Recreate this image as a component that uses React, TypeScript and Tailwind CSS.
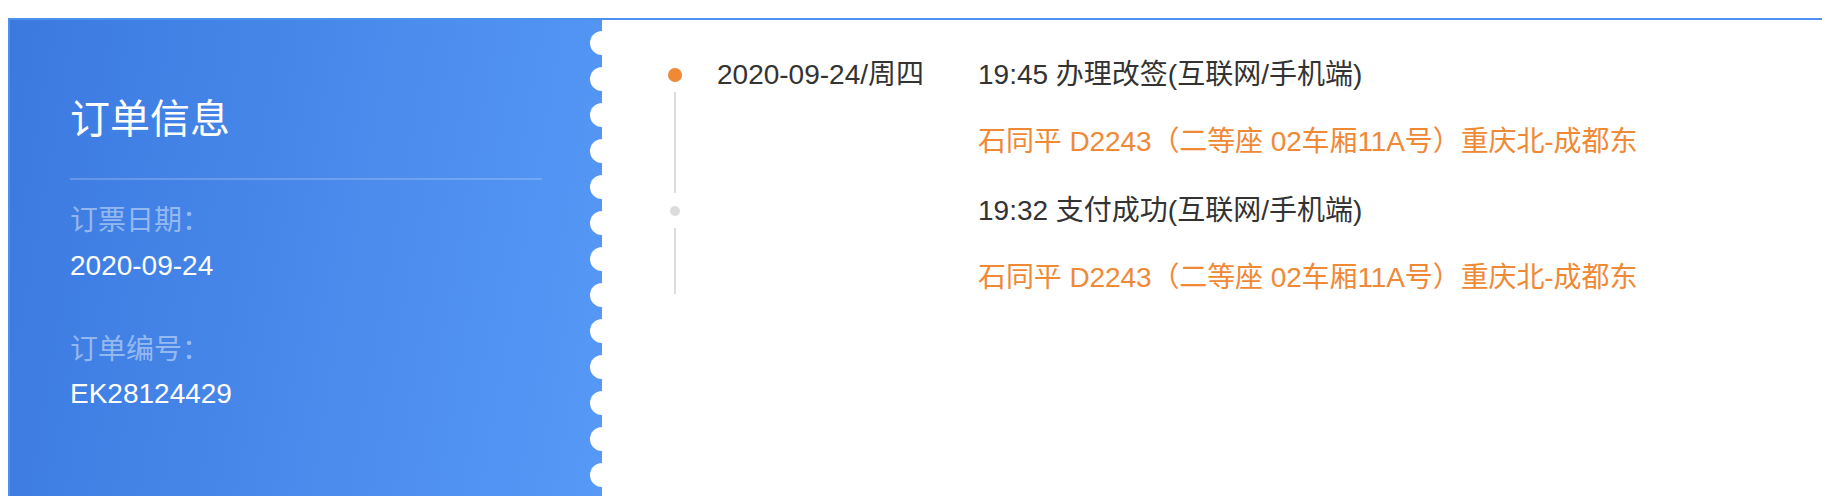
import React from "react";

const FONT = { fontFamily: '"Liberation Sans", "Noto Sans CJK SC", sans-serif' };

function Item({
  date,
  title,
  detail,
  active,
  last,
}: {
  date?: string;
  title: string;
  detail: string;
  active?: boolean;
  last?: boolean;
}) {
  return (
    <div className={`flex ${last ? "" : "pb-[33px]"}`}>
      <div className="w-[14px] shrink-0 flex flex-col items-center">
        {active ? (
          <div className="mt-[11px] w-[14px] h-[14px] rounded-full bg-[#ef8936]" />
        ) : (
          <div className="mt-[13px] w-[10px] h-[10px] rounded-full bg-[#dcdcdc]" />
        )}
        <div
          className={`${active ? "mt-[10px]" : "mt-[12px]"} w-[2px] flex-1 bg-[#dddddd] ${last ? "mb-[2px]" : "mb-[-33px]"}`}
        />
      </div>
      <div className="ml-[35px] w-[261px] shrink-0 text-[28px] leading-[36px] text-[#333333]">
        {date}
      </div>
      <div className="flex flex-col text-[28px] leading-[36px]">
        <div className="text-[#333333]">{title}</div>
        <div className="mt-[31px] text-[#ef8936] tracking-[-0.1px]">{detail}</div>
      </div>
    </div>
  );
}

export default function App() {
  const circles = Array.from({ length: 13 });
  return (
    <div
      className="w-[1822px] h-[496px] overflow-hidden bg-white pt-[18px] pl-[8px]"
      style={FONT}
    >
      <div className="flex h-[500px] border-t-2 border-l-2 border-[#4d91ee]">
        <div className="relative w-[592px] shrink-0 bg-[linear-gradient(100deg,#3b79df,#5699f6)] px-[60px] pt-[71px]">
          <div className="text-[40px] leading-[56px] text-white">订单信息</div>
          <div className="mt-[31px] h-[2px] bg-white/20" />
          <div className="mt-[21px] text-[28px] leading-[40px] text-white/45">订票日期：</div>
          <div className="mt-[5px] text-[28px] leading-[40px] text-white">2020-09-24</div>
          <div className="mt-[44px] text-[28px] leading-[40px] text-white/45">订单编号：</div>
          <div className="mt-[4px] text-[28px] leading-[40px] text-white">EK28124429</div>
          <div className="absolute top-[11px] right-[-12px] flex flex-col gap-[12px]">
            {circles.map((_, i) => (
              <div key={i} className="w-[24px] h-[24px] rounded-full bg-white" />
            ))}
          </div>
        </div>
        <div className="flex-1 pt-[37px] pl-[66px]">
          <Item
            active
            date="2020-09-24/周四"
            title="19:45 办理改签(互联网/手机端)"
            detail="石同平 D2243（二等座 02车厢11A号）重庆北-成都东"
          />
          <Item
            last
            title="19:32 支付成功(互联网/手机端)"
            detail="石同平 D2243（二等座 02车厢11A号）重庆北-成都东"
          />
        </div>
      </div>
    </div>
  );
}
